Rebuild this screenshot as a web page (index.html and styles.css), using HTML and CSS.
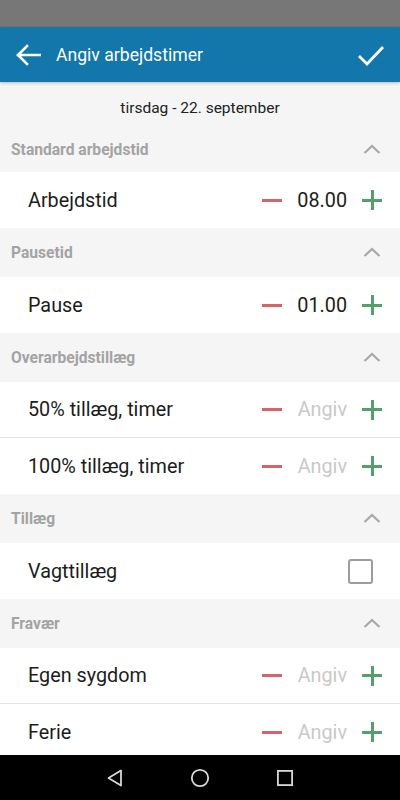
FILE: index.html
```html
<!DOCTYPE html>
<html lang="da">
<head>
<meta charset="utf-8">
<link rel="stylesheet" href="styles.css">
</head>
<body>
<div class="screen">
  <div class="statusbar"></div>
  <header class="appbar">
    <svg class="icon-back" width="26" height="22" viewBox="0 0 26 22"><path d="M25 11H3M12 2L3 11l9 9" fill="none" stroke="#fff" stroke-width="2.6" stroke-linecap="square"/></svg>
    <div class="title">Angiv arbejdstimer</div>
    <svg class="icon-check" width="28" height="22" viewBox="0 0 28 22"><path d="M2 12l8 8L26 3" fill="none" stroke="#fff" stroke-width="2.8"/></svg>
  </header>
  <main class="content">
    <div class="date">tirsdag - 22. september</div>

    <div class="section-head first"><span>Standard arbejdstid</span><svg class="chev" width="18" height="10" viewBox="0 0 18 10"><path d="M1.5 9L9 2l7.5 7" fill="none" stroke="#a8a8a8" stroke-width="2.2"/></svg></div>
    <div class="row"><span class="label">Arbejdstid</span><div class="ctrl"><span class="minus"></span><span class="val">08.00</span><span class="plus"></span></div></div>

    <div class="section-head"><span>Pausetid</span><svg class="chev" width="18" height="10" viewBox="0 0 18 10"><path d="M1.5 9L9 2l7.5 7" fill="none" stroke="#a8a8a8" stroke-width="2.2"/></svg></div>
    <div class="row"><span class="label">Pause</span><div class="ctrl"><span class="minus"></span><span class="val">01.00</span><span class="plus"></span></div></div>

    <div class="section-head"><span>Overarbejdstillæg</span><svg class="chev" width="18" height="10" viewBox="0 0 18 10"><path d="M1.5 9L9 2l7.5 7" fill="none" stroke="#a8a8a8" stroke-width="2.2"/></svg></div>
    <div class="row divided"><span class="label">50% tillæg, timer</span><div class="ctrl"><span class="minus"></span><span class="val empty">Angiv</span><span class="plus"></span></div></div>
    <div class="row"><span class="label">100% tillæg, timer</span><div class="ctrl"><span class="minus"></span><span class="val empty">Angiv</span><span class="plus"></span></div></div>

    <div class="section-head"><span>Tillæg</span><svg class="chev" width="18" height="10" viewBox="0 0 18 10"><path d="M1.5 9L9 2l7.5 7" fill="none" stroke="#a8a8a8" stroke-width="2.2"/></svg></div>
    <div class="row"><span class="label">Vagttillæg</span><span class="checkbox"></span></div>

    <div class="section-head"><span>Fravær</span><svg class="chev" width="18" height="10" viewBox="0 0 18 10"><path d="M1.5 9L9 2l7.5 7" fill="none" stroke="#a8a8a8" stroke-width="2.2"/></svg></div>
    <div class="row divided"><span class="label">Egen sygdom</span><div class="ctrl"><span class="minus"></span><span class="val empty">Angiv</span><span class="plus"></span></div></div>
    <div class="row"><span class="label">Ferie</span><div class="ctrl"><span class="minus"></span><span class="val empty">Angiv</span><span class="plus"></span></div></div>
  </main>
  <nav class="navbar">
    <svg width="18" height="20" viewBox="0 0 18 20"><path d="M15 2.5v15L2.5 10z" fill="none" stroke="#d8d8d8" stroke-width="1.8" stroke-linejoin="round"/></svg>
    <svg width="20" height="20" viewBox="0 0 20 20"><circle cx="10" cy="10" r="8.2" fill="none" stroke="#d8d8d8" stroke-width="1.8"/></svg>
    <svg width="18" height="18" viewBox="0 0 18 18"><rect x="1.9" y="1.9" width="14.2" height="14.2" fill="none" stroke="#d8d8d8" stroke-width="1.8"/></svg>
  </nav>
</div>
</body>
</html>
```
FILE: styles.css
```css
* { box-sizing: border-box; }
html, body { margin: 0; padding: 0; }
body {
  font-family: Roboto, "Noto Sans", "Liberation Sans", sans-serif;
  background: #f5f5f5;
}
.screen {
  width: 400px;
  height: 800px;
  display: flex;
  flex-direction: column;
  overflow: hidden;
  background: #f5f5f5;
}
.statusbar {
  height: 27px;
  flex: none;
  background: #777777;
}
.appbar {
  height: 55px;
  flex: none;
  background: #1377ab;
  display: flex;
  align-items: center;
  padding: 0 15px 0 15px;
  box-shadow: 0 1px 3px rgba(0,0,0,0.25);
  position: relative;
  z-index: 1;
}
.icon-back { margin-right: 15px; flex: none; }
.title {
  color: #fff;
  font-size: 17.6px;
  flex: 1;
  padding-top: 1px;
}
.icon-check { flex: none; }
.content {
  flex: 1;
  overflow: hidden;
}
.date {
  height: 48px;
  display: flex;
  align-items: center;
  justify-content: center;
  font-size: 15.5px;
  color: #222;
  padding-top: 3px;
}
.section-head {
  height: 49px;
  display: flex;
  align-items: center;
  justify-content: space-between;
  padding: 0 19px 0 11px;
  font-size: 15.6px;
  font-weight: 700;
  color: #a3a3a3;
  background: #f5f5f5;
}
.section-head.first { height: 42px; padding-bottom: 2px; }
.chev { margin-top: -2px; }
.row {
  height: 56px;
  display: flex;
  align-items: center;
  justify-content: space-between;
  padding: 0 18px 0 28px;
  background: #fff;
}
.row.divided {
  height: 55px;
  border-bottom: 1px solid #e3e3e3;
  box-sizing: content-box;
}
.label {
  font-size: 19.8px;
  color: #1c1c1c;
}
.ctrl {
  display: flex;
  align-items: center;
}
.minus {
  width: 20px;
  height: 3px;
  background: #d8616a;
  margin-right: 12px;
}
.val {
  font-size: 19.8px;
  color: #1c1c1c;
  width: 53px;
  text-align: right;
  margin-right: 15px;
}
.val.empty { color: #c9c9c9; }
.plus {
  width: 20px;
  height: 20px;
  background:
    linear-gradient(#559f6d, #559f6d) center / 20px 3px no-repeat,
    linear-gradient(#559f6d, #559f6d) center / 3px 20px no-repeat;
}
.checkbox {
  width: 25px;
  height: 25px;
  border: 2px solid #9c9c9c;
  border-radius: 3px;
  margin-right: 9px;
}
.navbar {
  height: 45px;
  flex: none;
  background: #000;
  display: flex;
  align-items: center;
  justify-content: center;
  gap: 66px;
}
```
